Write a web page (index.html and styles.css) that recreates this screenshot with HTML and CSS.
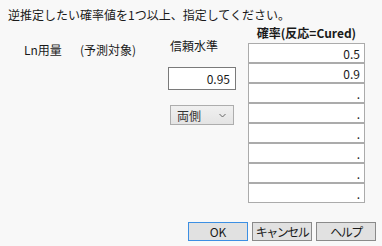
FILE: index.html
```html
<!DOCTYPE html>
<html lang="ja">
<head>
  <meta charset="UTF-8">
  <meta name="viewport" content="width=device-width, initial-scale=1.0">
  <title>逆推定</title>
  <link rel="stylesheet" href="styles.css">
</head>
<body>
  <div class="dialog">
    <p class="prompt">逆推定したい確率値を1つ以上、指定してください。</p>
    <div class="main">
      <div class="col-target">
        <span class="target-name">Ln用量</span>
        <span class="target-note">(予測対象)</span>
      </div>
      <div class="col-conf">
        <div class="conf-label">信頼水準</div>
        <div class="num-box">0.95</div>
        <div class="select">
          <span>両側</span>
          <svg width="7" height="5" viewBox="0 0 7 5"><path d="M0.5 1 L3.5 4 L6.5 1" fill="none" stroke="#666" stroke-width="1"/></svg>
        </div>
      </div>
      <div class="col-prob">
        <div class="prob-head">確率(反応=Cured)</div>
        <ul class="cells">
          <li class="cell">0.5</li>
          <li class="cell">0.9</li>
          <li class="cell">.</li>
          <li class="cell">.</li>
          <li class="cell">.</li>
          <li class="cell">.</li>
          <li class="cell">.</li>
          <li class="cell">.</li>
        </ul>
      </div>
    </div>
    <div class="buttons">
      <button class="btn btn-default">OK</button>
      <button class="btn btn-narrow">キャンセル</button>
      <button class="btn btn-narrow">ヘルプ</button>
    </div>
  </div>
</body>
</html>
```

FILE: styles.css
```css
*{margin:0px;padding:0px;box-sizing:border-box;}
ul, ol, li{list-style:none;}

body {
  background: #f8f8f8;
  color: #1a1a1a;
  font-family: "Noto Sans CJK JP", "Noto Sans", sans-serif;
  font-size: 12px;
  line-height: 17px;
}
.dialog {
  width: 382px;
  height: 246px;
}
.prompt {
  height: 24px;
  padding: 6px 0 0 8px;
}
.main {
  display: flex;
  align-items: flex-start;
}
.col-target {
  display: flex;
  width: 168px;
  padding-left: 24px;
  margin-top: 17px;
}
.target-name {
  width: 56px;
}
.col-conf {
  width: 80px;
  margin-top: 13px;
}
.conf-label {
  padding-left: 2px;
}
.num-box {
  margin-top: 13px;
  width: 68px;
  height: 23px;
  border: 1px solid #7a7a7a;
  background: #fff;
  text-align: right;
  padding: 2px 5px 0 0;
}
.select {
  display: flex;
  justify-content: space-between;
  align-items: center;
  margin: 15px 0 0 2px;
  width: 64px;
  height: 20px;
  border: 1px solid #adadad;
  background: linear-gradient(#f0f0f0, #e4e4e4);
  padding: 0 7px 0 6px;
  color: #333;
}
.col-prob {
  width: 117px;
}
.prob-head {
  font-weight: bold;
  text-align: center;
}
.cells {
  margin-top: 2px;
}
.cell {
  height: 20px;
  border: 1px solid #ababab;
  background: #fff;
  text-align: right;
  padding: 1px 4px 0 0;
}
.buttons {
  display: flex;
  justify-content: flex-end;
  gap: 4px;
  margin-top: 19px;
  padding-right: 6px;
}
.btn {
  width: 60px;
  height: 19px;
  padding: 0;
  border: 1px solid #8a8a8a;
  background: #e1e1e1;
  font: inherit;
  color: #1a1a1a;
  line-height: 16px;
  white-space: nowrap;
}
.btn-narrow {
  letter-spacing: -1.5px;
}
.btn-default {
  border-color: #3c8fe3;
}
```
